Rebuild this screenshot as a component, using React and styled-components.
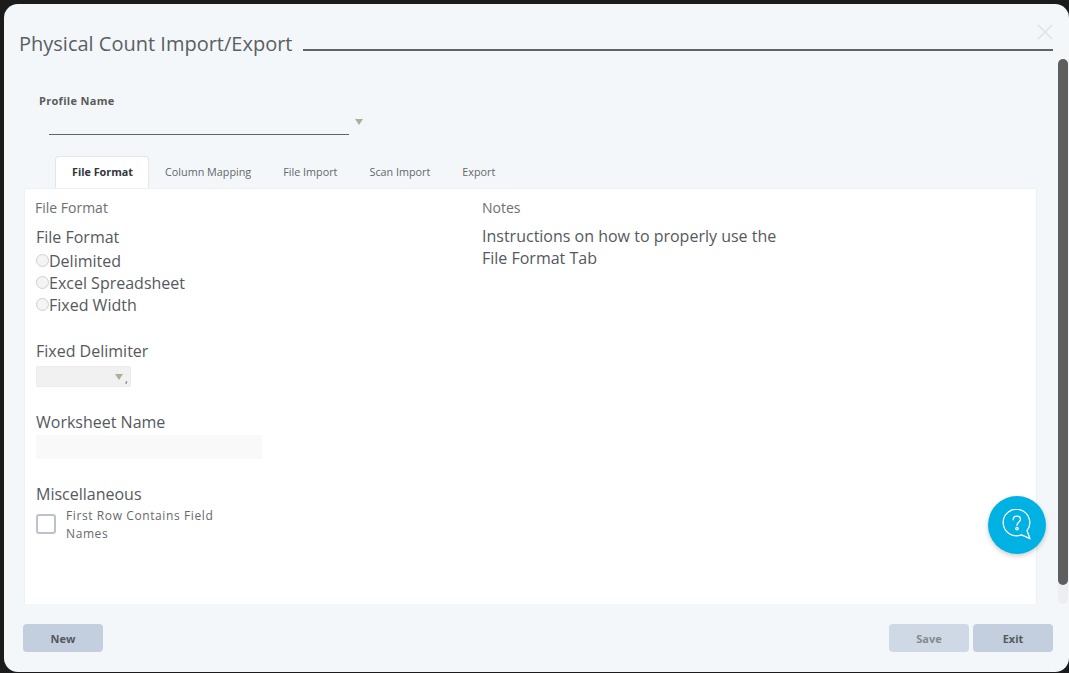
import React from 'react';
import styled, { createGlobalStyle } from 'styled-components';

const Global = createGlobalStyle`
  html, body {
    margin: 0;
    padding: 0;
    height: 673px;
    overflow: hidden;
    background: #1b1b1b;
    font-family: "Open Sans", "Liberation Sans", sans-serif;
  }
`;

const Modal = styled.div`
  position: relative;
  box-sizing: border-box;
  width: 1065px;
  height: 668px;
  margin: 4px 0 0 4px;
  background: #f4f7fa;
  border-radius: 14px;
  overflow: hidden;
  display: flex;
  flex-direction: column;
`;

const Header = styled.div`
  display: flex;
  align-items: flex-end;
  gap: 11px;
  padding: 26px 16px 0 15px;
  height: 28px;
`;

const Title = styled.h1`
  margin: 0;
  font-size: 20px;
  font-weight: 400;
  line-height: 28px;
  color: #5a5f63;
  white-space: nowrap;
`;

const TitleRule = styled.div`
  flex: 1;
  height: 2px;
  margin-bottom: 7px;
  background: #5f6468;
`;

const Close = styled.button`
  position: absolute;
  top: 19px;
  right: 15px;
  width: 18px;
  height: 18px;
  padding: 0;
  border: 0;
  background: none;
`;

const ProfileBlock = styled.div`
  padding: 35px 0 0 35px;
`;

const ProfileLabel = styled.div`
  font-size: 11px;
  font-weight: 700;
  letter-spacing: 0.3px;
  line-height: 16px;
  color: #5b5b5b;
`;

const ProfileRow = styled.div`
  display: flex;
  align-items: center;
  gap: 6px;
  margin-left: 10px;
`;

const ProfileInput = styled.div`
  width: 300px;
  height: 25px;
  border-bottom: 1px solid #5f6468;
`;

const Caret = styled.span`
  width: 0;
  height: 0;
  border-left: 4px solid transparent;
  border-right: 4px solid transparent;
  border-top: 6px solid #a9b296;
`;

const Tabs = styled.div`
  display: flex;
  margin: 21px 0 0 51px;
  height: 32px;
  position: relative;
  z-index: 1;
`;

const Tab = styled.div`
  box-sizing: border-box;
  height: 32px;
  padding: 0 16px;
  font-size: 10.8px;
  line-height: 31px;
  white-space: nowrap;
  color: #63676b;
`;

const ActiveTab = styled(Tab)`
  width: 94px;
  padding: 0 0 0 16px;
  line-height: 29px;
  color: #33373b;
  font-weight: 700;
  background: #fff;
  border: 1px solid #e3e7ed;
  border-bottom: 0;
  border-radius: 4px 4px 0 0;
`;

const Panel = styled.div`
  box-sizing: border-box;
  width: 1013px;
  height: 416px;
  margin-left: 20px;
  background: #fff;
  border: 1px solid #edf0f4;
  border-bottom: 0;
  border-radius: 2px 2px 0 0;
  display: grid;
  grid-template-columns: 446px 300px;
  padding-left: 11px;
`;

const Column = styled.div`
  display: flex;
  flex-direction: column;
  padding-top: 10px;
`;

const Legend = styled.div`
  font-size: 14px;
  line-height: 18px;
  color: #6d6f72;
  margin-left: ${p => (p.$flush ? '0' : '-1px')};
`;

const GroupLabel = styled.div`
  font-size: 16px;
  line-height: 22px;
  color: #55595d;
`;

const FirstLabel = styled(GroupLabel)`
  margin-top: 9px;
`;

const RadioGroup = styled.div`
  display: flex;
  flex-direction: column;
  margin: 2px 0 24px;
`;

const Radio = styled.label`
  display: flex;
  align-items: center;
  font-size: 16px;
  line-height: 22px;
  color: #55595d;
`;

const RadioDot = styled.span`
  box-sizing: border-box;
  width: 13px;
  height: 13px;
  margin-bottom: 2px;
  border: 1px solid #cfd0d2;
  border-radius: 50%;
  background: #f4f4f4;
`;

const DelimiterSelect = styled.div`
  box-sizing: border-box;
  width: 95px;
  height: 21px;
  margin: 4px 0 24px;
  padding-right: 2px;
  display: flex;
  align-items: center;
  justify-content: flex-end;
  gap: 2px;
  background: #f1f1f1;
  border: 1px solid #ececec;
  border-radius: 2px;
`;

const Comma = styled.span`
  align-self: flex-end;
  width: 3px;
  font-size: 11px;
  line-height: 14px;
  color: #55595d;
`;

const TextBox = styled.div`
  width: 226px;
  height: 24px;
  margin: 2px 0 24px;
  background: #f9f9f9;
`;

const CheckRow = styled.label`
  display: flex;
  align-items: center;
  gap: 10px;
  width: 190px;
  margin-top: 2px;
`;

const CheckBox = styled.span`
  box-sizing: border-box;
  flex: none;
  width: 20px;
  height: 20px;
  margin-bottom: 2px;
  border: 2px solid #bcc1cb;
  border-radius: 3px;
  background: #fff;
`;

const CheckText = styled.span`
  font-size: 12px;
  line-height: 18px;
  letter-spacing: 0.6px;
  color: #66696c;
`;

const NoteText = styled.div`
  font-size: 16px;
  line-height: 22px;
  color: #55595d;
  margin-top: 8px;
  width: 300px;
`;

const Footer = styled.div`
  flex: 1;
  display: flex;
  justify-content: space-between;
  padding: 20px 16px 0 19px;
`;

const ButtonGroup = styled.div`
  display: flex;
  gap: 4px;
`;

const Button = styled.button`
  width: 80px;
  height: 28px;
  padding: 0;
  border: 0;
  border-radius: 4px;
  font-family: inherit;
  font-size: 11px;
  font-weight: 700;
  background: ${p => (p.disabled ? '#cfd9e5' : '#c3cfdf')};
  color: ${p => (p.disabled ? '#85898d' : '#55585c')};
`;

const HelpButton = styled.button`
  position: absolute;
  left: 984px;
  top: 492px;
  width: 58px;
  height: 58px;
  padding: 0;
  border: 0;
  border-radius: 50%;
  background: #00b2e3;
  box-shadow: 0 2px 5px rgba(0, 0, 0, 0.2);
  display: flex;
  align-items: center;
  justify-content: center;
`;

const ScrollTrack = styled.div`
  position: absolute;
  right: 1px;
  top: 55px;
  bottom: 68px;
  width: 10px;
  border-radius: 5px;
  background: #eceef1;
`;

const ScrollThumb = styled.div`
  width: 10px;
  height: 526px;
  border-radius: 5px;
  background: #5e5e5e;
`;

const tabs = ['Column Mapping', 'File Import', 'Scan Import', 'Export'];
const formats = ['Delimited', 'Excel Spreadsheet', 'Fixed Width'];

export default function App() {
  return (
    <>
      <Global />
      <Modal>
        <Header>
          <Title>Physical Count Import/Export</Title>
          <TitleRule />
        </Header>
        <Close aria-label="Close">
          <svg width="18" height="18" viewBox="0 0 18 18" fill="none" stroke="#dfe1e3" strokeWidth="1.7">
            <path d="M2 2l14 14M16 2L2 16" />
          </svg>
        </Close>

        <ProfileBlock>
          <ProfileLabel>Profile Name</ProfileLabel>
          <ProfileRow>
            <ProfileInput />
            <Caret />
          </ProfileRow>
        </ProfileBlock>

        <Tabs>
          <ActiveTab>File Format</ActiveTab>
          {tabs.map(t => (
            <Tab key={t}>{t}</Tab>
          ))}
        </Tabs>

        <Panel>
          <Column>
            <Legend>File Format</Legend>
            <FirstLabel>File Format</FirstLabel>
            <RadioGroup>
              {formats.map(f => (
                <Radio key={f}><RadioDot />{f}</Radio>
              ))}
            </RadioGroup>
            <GroupLabel>Fixed Delimiter</GroupLabel>
            <DelimiterSelect>
              <Caret />
              <Comma>,</Comma>
            </DelimiterSelect>
            <GroupLabel>Worksheet Name</GroupLabel>
            <TextBox />
            <GroupLabel>Miscellaneous</GroupLabel>
            <CheckRow>
              <CheckBox />
              <CheckText>First Row Contains Field Names</CheckText>
            </CheckRow>
          </Column>
          <Column>
            <Legend $flush>Notes</Legend>
            <NoteText>Instructions on how to properly use the File Format Tab</NoteText>
          </Column>
        </Panel>

        <Footer>
          <Button>New</Button>
          <ButtonGroup>
            <Button disabled>Save</Button>
            <Button>Exit</Button>
          </ButtonGroup>
        </Footer>

        <HelpButton aria-label="Help">
          <svg width="30" height="32" viewBox="0 0 30 32" fill="none" stroke="#fff" strokeWidth="1.3">
            <path d="M25 21.6A13.3 13.3 0 1 0 19.5 25.8L28 29.7Z" strokeLinejoin="round" />
            <path d="M11.2 10.8c0-2.200 1.600-3.700 3.700-3.700s3.600 1.400 3.600 3.200c0 2.700-3.300 2.800-3.500 6" strokeLinecap="round" />
            <circle cx="15" cy="19.6" r="1.200" />
          </svg>
        </HelpButton>

        <ScrollTrack>
          <ScrollThumb />
        </ScrollTrack>
      </Modal>
    </>
  );
}
